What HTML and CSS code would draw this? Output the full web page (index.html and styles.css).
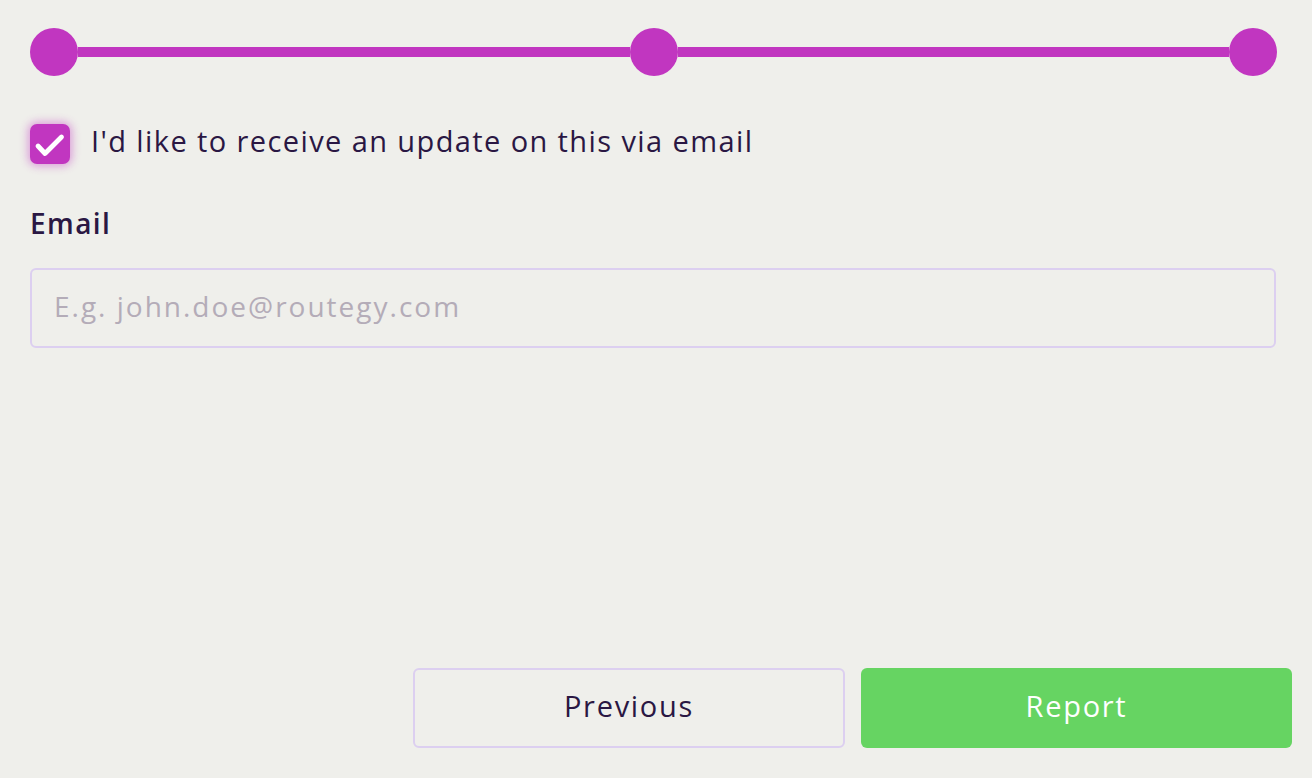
FILE: index.html
```html
<!DOCTYPE html>
<html>
<head>
<meta charset="utf-8">
<link rel="stylesheet" href="styles.css">
</head>
<body>
<div class="page">
  <div class="stepper">
    <span class="dot"></span><span class="bar"></span><span class="dot"></span><span class="bar"></span><span class="dot"></span>
  </div>
  <label class="check-row">
    <span class="checkbox">
      <svg width="40" height="40" viewBox="0 0 40 40"><path d="M8 22 L15 29.5 L31.5 13" fill="none" stroke="#fff" stroke-width="4.8" stroke-linecap="round" stroke-linejoin="round"/></svg>
    </span>
    <span class="check-text">I'd like to receive an update on this via email</span>
  </label>
  <div class="field">
    <div class="label">Email</div>
    <div class="input"><span class="placeholder">E.g. john.doe@routegy.com</span></div>
  </div>
  <div class="actions">
    <button class="btn btn-prev">Previous</button>
    <button class="btn btn-report">Report</button>
  </div>
</div>
</body>
</html>
```
FILE: styles.css
```css
html, body {
  margin: 0;
  padding: 0;
  background: #efefeb;
}
body {
  font-family: "Open Sans", Lato, sans-serif;
  color: #2a1743;
}
.page {
  height: 778px;
  box-sizing: border-box;
  display: flex;
  flex-direction: column;
  padding: 28px 20px 0 30px;
}
.stepper {
  display: flex;
  align-items: center;
  margin-right: 15px;
}
.dot {
  width: 48px;
  height: 48px;
  border-radius: 50%;
  background: #c136c0;
  flex: none;
}
.bar {
  flex: 1;
  height: 10px;
  background: #c136c0;
}
.check-row {
  display: flex;
  align-items: center;
  margin-top: 48px;
}
.checkbox {
  width: 40px;
  height: 40px;
  border-radius: 7px;
  background: #c136c0;
  box-shadow: 0 0 8px 2px rgba(193, 54, 192, 0.45);
  display: flex;
  flex: none;
}
.check-text {
  margin-left: 21px;
  font-size: 29px;
  line-height: 36px;
  margin-top: -6px;
  letter-spacing: 1.4px;
}
.field {
  margin-top: 42px;
  margin-right: 16px;
}
.label {
  font-size: 28px;
  font-weight: 600;
  line-height: 34px;
  letter-spacing: 1.4px;
}
.input {
  margin-top: 28px;
  height: 80px;
  box-sizing: border-box;
  border: 2px solid #dccff0;
  border-radius: 6px;
  display: flex;
  align-items: center;
  padding-left: 22px;
}
.placeholder {
  font-size: 28px;
  color: #b4acb8;
  margin-top: -4px;
  letter-spacing: 2px;
}
.actions {
  margin-top: auto;
  margin-bottom: 30px;
  display: flex;
  justify-content: flex-end;
  gap: 16px;
}
.btn {
  width: 432px;
  height: 80px;
  border-radius: 6px;
  font-family: "Open Sans", Lato, sans-serif;
  font-size: 29px;
  letter-spacing: 1.7px;
  padding: 0 0 6px;
  cursor: pointer;
}
.btn-prev {
  background: transparent;
  border: 2px solid #dccff0;
  color: #2a1743;
}
.btn-report {
  background: #66d462;
  border: none;
  color: #ffffff;
  width: 431px;
}
```
